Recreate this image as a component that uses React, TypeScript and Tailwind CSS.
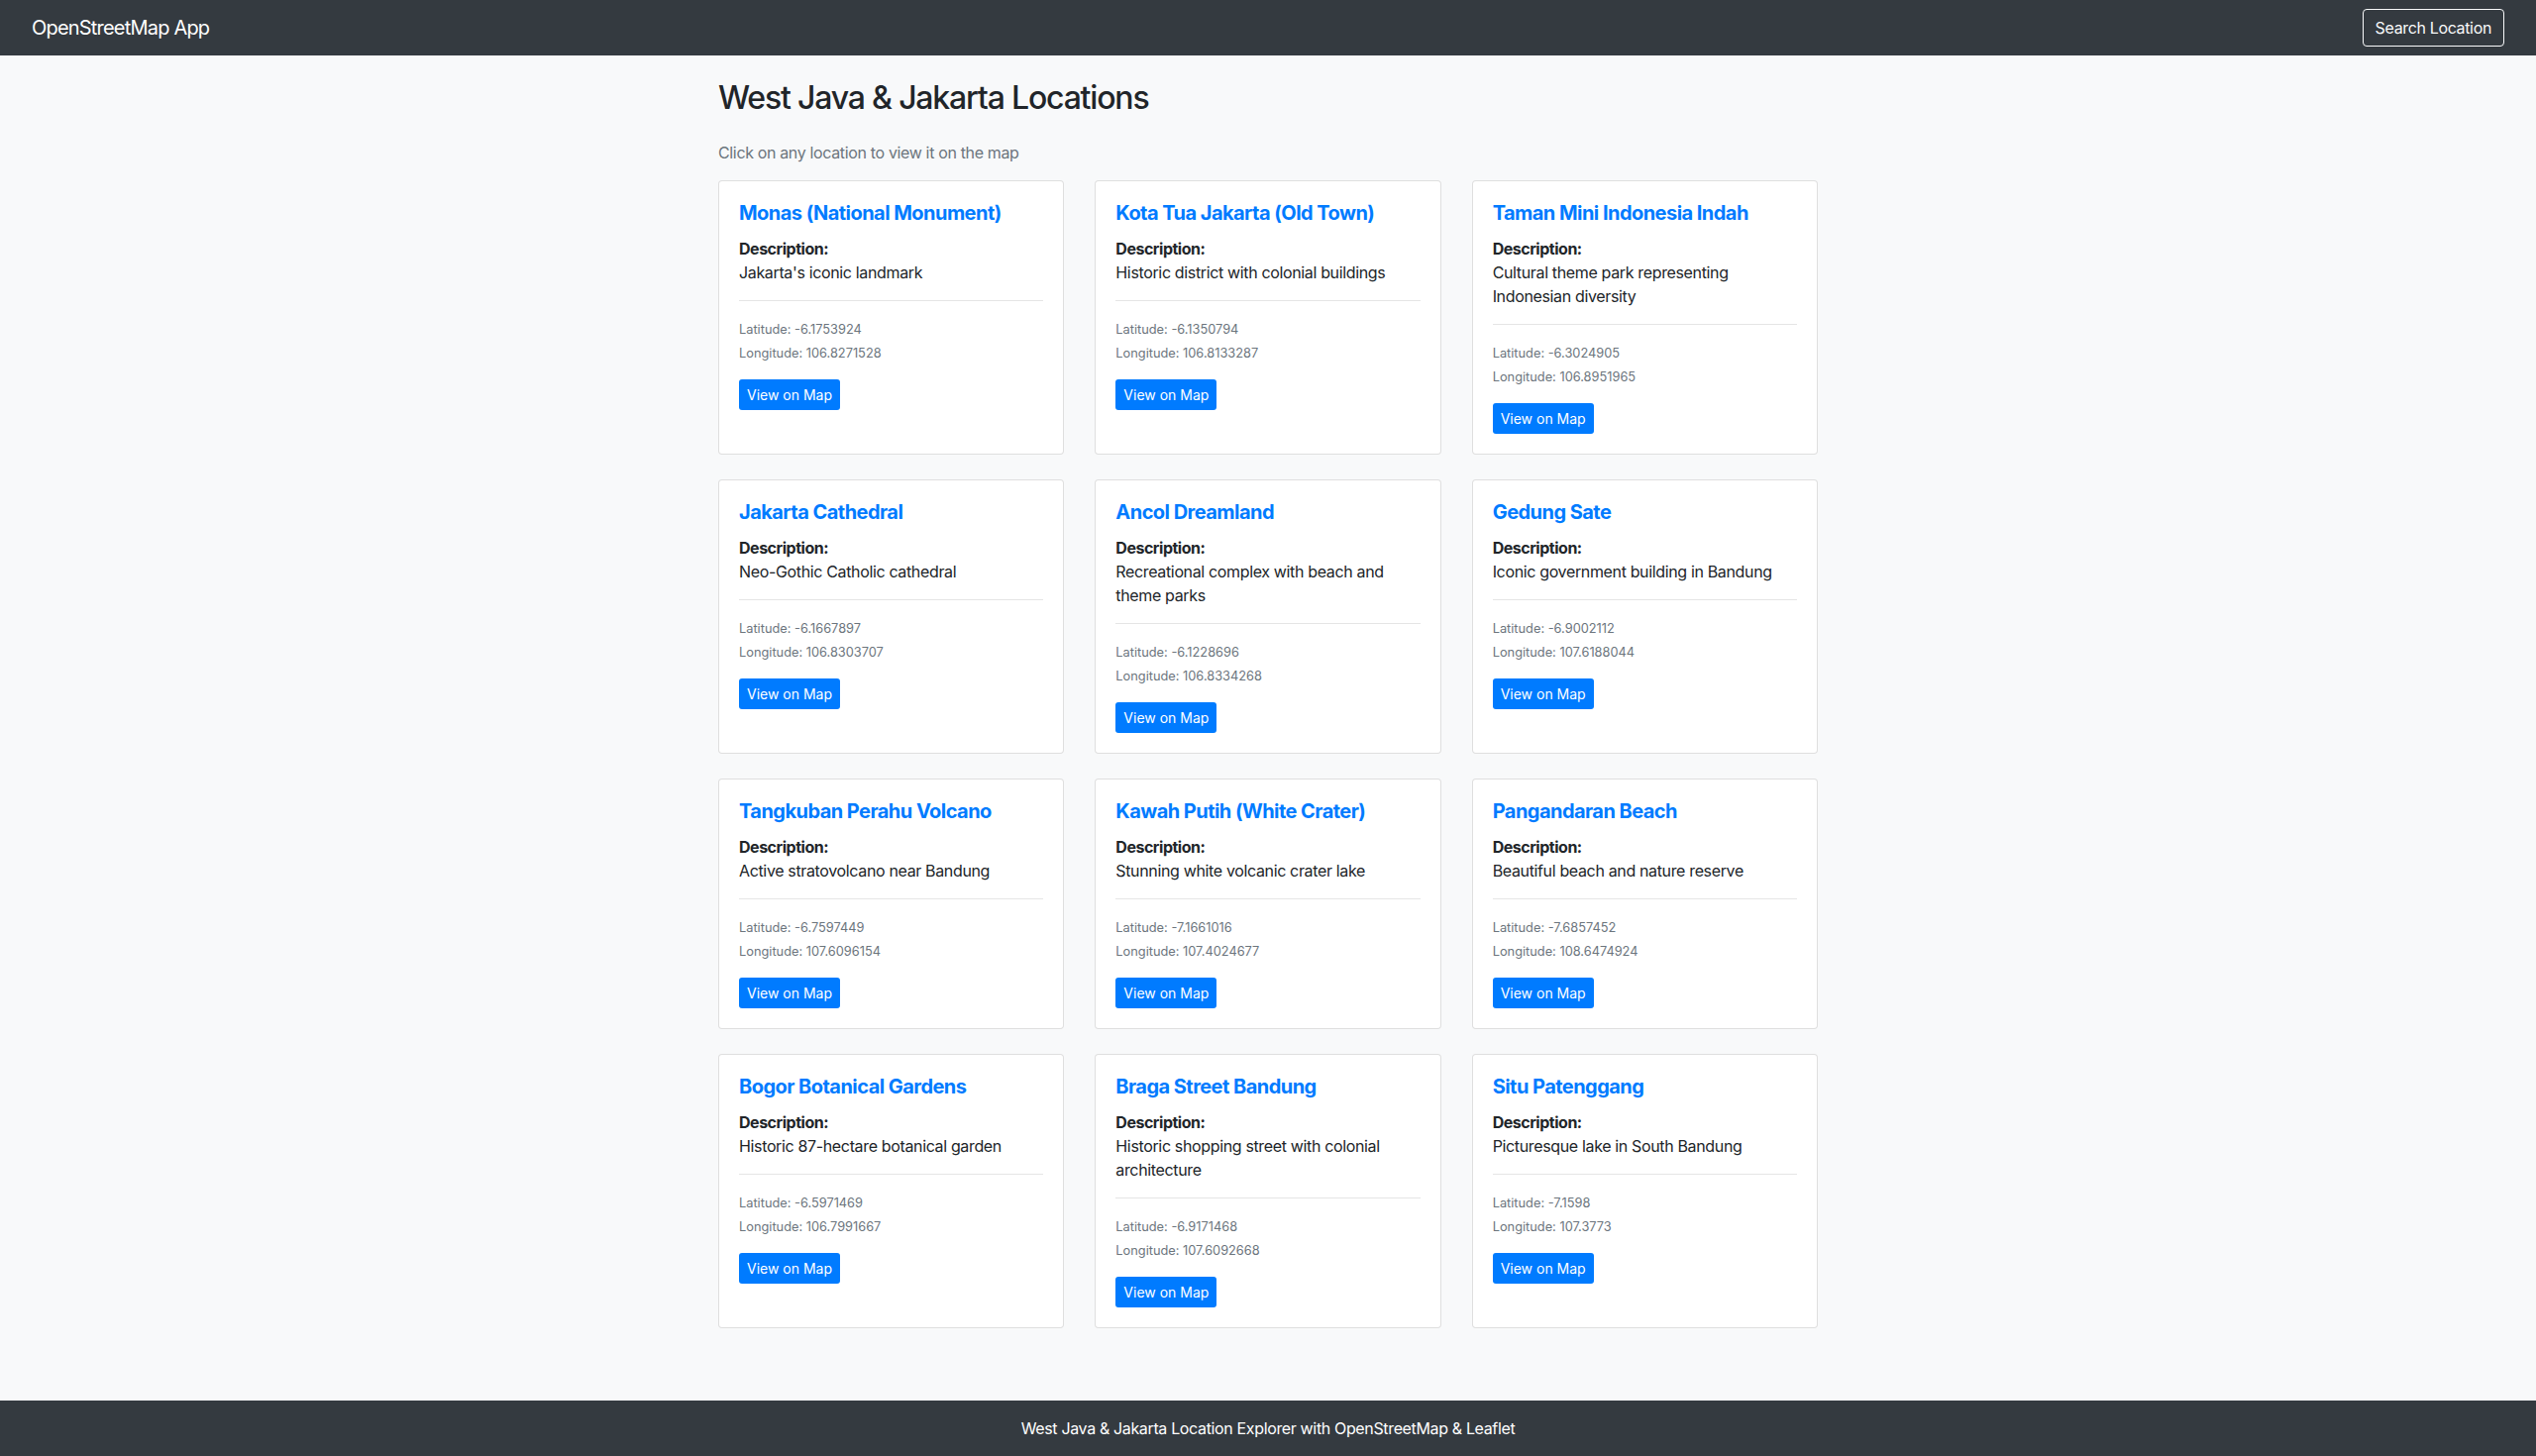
const locations = [
  { name: "Monas (National Monument)", desc: "Jakarta's iconic landmark", lat: "-6.1753924", lng: "106.8271528" },
  { name: "Kota Tua Jakarta (Old Town)", desc: "Historic district with colonial buildings", lat: "-6.1350794", lng: "106.8133287" },
  { name: "Taman Mini Indonesia Indah", desc: "Cultural theme park representing Indonesian diversity", lat: "-6.3024905", lng: "106.8951965" },
  { name: "Jakarta Cathedral", desc: "Neo-Gothic Catholic cathedral", lat: "-6.1667897", lng: "106.8303707" },
  { name: "Ancol Dreamland", desc: "Recreational complex with beach and theme parks", lat: "-6.1228696", lng: "106.8334268" },
  { name: "Gedung Sate", desc: "Iconic government building in Bandung", lat: "-6.9002112", lng: "107.6188044" },
  { name: "Tangkuban Perahu Volcano", desc: "Active stratovolcano near Bandung", lat: "-6.7597449", lng: "107.6096154" },
  { name: "Kawah Putih (White Crater)", desc: "Stunning white volcanic crater lake", lat: "-7.1661016", lng: "107.4024677" },
  { name: "Pangandaran Beach", desc: "Beautiful beach and nature reserve", lat: "-7.6857452", lng: "108.6474924" },
  { name: "Bogor Botanical Gardens", desc: "Historic 87-hectare botanical garden", lat: "-6.5971469", lng: "106.7991667" },
  { name: "Braga Street Bandung", desc: "Historic shopping street with colonial architecture", lat: "-6.9171468", lng: "107.6092668" },
  { name: "Situ Patenggang", desc: "Picturesque lake in South Bandung", lat: "-7.1598", lng: "107.3773" },
];

function LocationCard({ loc }: { loc: (typeof locations)[number] }) {
  return (
    <div className="rounded border border-[rgba(0,0,0,0.125)] bg-white p-5">
      <h5 className="mb-3 text-xl leading-6 font-bold tracking-[-0.027em] text-[#007bff]">{loc.name}</h5>
      <p className="mb-4 text-base leading-6">
        <strong className="font-bold tracking-[-0.03em]">Description:</strong>
        <br />
        {loc.desc}
      </p>
      <hr className="mb-4 border-t border-[rgba(0,0,0,0.1)]" />
      <p className="pt-[2px] text-[12.8px] leading-[22px] tracking-normal text-[#6c757d]">Latitude: {loc.lat}</p>
      <p className="pt-[2px] text-[12.8px] leading-[22px] tracking-normal text-[#6c757d]">Longitude: {loc.lng}</p>
      <button className="mt-[15px] h-[31px] rounded-[3px] bg-[#007bff] px-2 text-sm leading-[21px] tracking-normal text-white">
        View on Map
      </button>
    </div>
  );
}

export default function App() {
  return (
    <div className="flex min-h-screen flex-col bg-[#f8f9fa] font-['Inter','Liberation_Sans',sans-serif] tracking-[-0.022em] text-[#212529]">
      {/* Navbar */}
      <nav className="flex h-14 items-center justify-between bg-[#343a40] px-8">
        <span className="text-xl leading-[30px] tracking-[-0.04em] text-white">OpenStreetMap App</span>
        <button className="h-[38px] rounded border border-[#f8f9fa] px-3 text-base text-[#f8f9fa]">
          Search Location
        </button>
      </nav>

      {/* Content */}
      <main className="mx-auto mt-6 mb-[70px] w-[1110px]">
        <h2 className="mb-6 text-[32px] leading-[1.2] font-medium tracking-[-0.037em]">West Java &amp; Jakarta Locations</h2>
        <p className="mb-4 text-base leading-6 text-[#6c757d]">Click on any location to view it on the map</p>
        <div className="grid grid-cols-3 gap-x-[31px] gap-y-[25px]">
          {locations.map((loc) => (
            <LocationCard key={loc.name} loc={loc} />
          ))}
        </div>
      </main>

      <footer className="mt-auto bg-[#343a40] py-4 text-center text-base leading-6 text-white">
        West Java &amp; Jakarta Location Explorer with OpenStreetMap &amp; Leaflet
      </footer>
    </div>
  );
}
